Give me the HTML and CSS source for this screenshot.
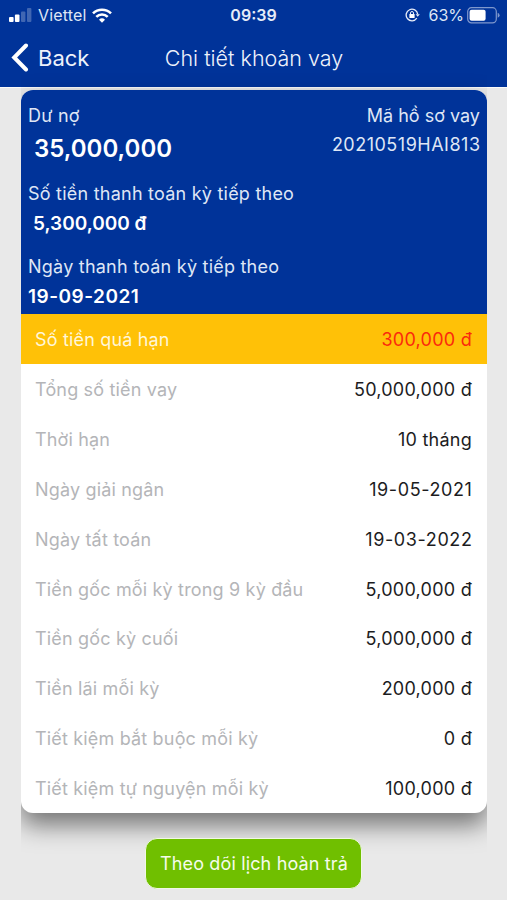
FILE: index.html
```
<!DOCTYPE html>
<html lang="vi">
<head>
    <meta charset="UTF-8">
    <meta name="viewport" content="width=device-width, initial-scale=1.0">
    <title>Chi tiết khoản vay</title>
    <link rel="stylesheet" href="styles.css">
</head>
<body>
    <header class="header">
        <!-- Thanh trạng thái -->
        <div class="status-bar">
            <div class="status-left">
                <svg class="signal" width="23" height="14" viewBox="0 0 23 14" fill="#fff">
                    <rect x="0" y="9" width="4.6" height="5" rx="1"/>
                    <rect x="5.9" y="6.5" width="4.6" height="7.5" rx="1"/>
                    <rect x="12" y="3.5" width="4.4" height="10.5" rx="1" opacity="0.25"/>
                    <rect x="18" y="0" width="4.4" height="14" rx="1" opacity="0.25"/>
                </svg>
                <span class="carrier">Viettel</span>
                <svg class="wifi" width="20" height="15" viewBox="0 0 20 15" fill="none" stroke="#fff" stroke-width="2.6">
                    <path d="M1 5.4a12.8 12.8 0 0 1 18 0"/>
                    <path d="M4.3 8.8a8.1 8.1 0 0 1 11.4 0"/>
                    <path d="M10 14.8l-3-3.1a4.3 4.3 0 0 1 6 0z" fill="#fff" stroke="none"/>
                </svg>
            </div>
            <div class="status-time">09:39</div>
            <div class="status-right">
                <svg class="lock" width="15" height="14" viewBox="0 0 15 14" fill="none" stroke="#e6ecf8" stroke-width="1.3">
                    <path d="M11.8 10.2a5.8 5.8 0 1 1 .9-4"/>
                    <path d="M10.6 6.2h4.2l-2.1 2.6z" fill="#e6ecf8" stroke="none"/>
                    <rect x="4.4" y="6" width="5.2" height="4" fill="#fff" stroke="none"/>
                    <path d="M5.5 6.3V5a1.5 1.5 0 0 1 3 0v1.3" stroke-width="1"/>
                </svg>
                <span class="percent">63%</span>
                <svg class="battery" width="33" height="17" viewBox="0 0 33 17">
                    <rect x="0.7" y="0.7" width="28.6" height="15.2" rx="3.8" fill="none" stroke="#7f98cd" stroke-width="1.2"/>
                    <rect x="2.6" y="2.8" width="16" height="11" rx="2" fill="#fff"/>
                    <path d="M30.7 5.8q1.9.8 1.9 2.5t-1.9 2.5z" fill="#7f98cd"/>
                </svg>
            </div>
        </div>
        <!-- Thanh điều hướng -->
        <nav class="nav-bar">
            <a href="#" class="back">
                <svg width="18" height="29" viewBox="0 0 18 29" fill="none" stroke="#fff" stroke-width="4" stroke-linecap="round">
                    <path d="M15 2.5L3.2 14.5 15 26.5"/>
                </svg>
                <span>Back</span>
            </a>
            <h1 class="title">Chi tiết khoản vay</h1>
        </nav>
    </header>

    <main class="content">
        <div class="card-wrap">
            <div class="card">
                <div class="summary">
                    <div class="summary-main">
                        <div class="label">Dư nợ</div>
                        <div class="balance">35,000,000</div>
                        <div class="label label-next">Số tiền thanh toán kỳ tiếp theo</div>
                        <div class="amount">5,300,000 đ</div>
                        <div class="label label-date">Ngày thanh toán kỳ tiếp theo</div>
                        <div class="date">19-09-2021</div>
                    </div>
                    <div class="loan-code">
                        <div class="label">Mã hồ sơ vay</div>
                        <div class="code">20210519HAI813</div>
                    </div>
                </div>
                <!-- Chi tiết -->
                <div class="rows">
                    <div class="row overdue"><span>Số tiền quá hạn</span><b>300,000 đ</b></div>
                    <div class="row"><span>Tổng số tiền vay</span><b>50,000,000 đ</b></div>
                    <div class="row"><span>Thời hạn</span><b>10 tháng</b></div>
                    <div class="row"><span>Ngày giải ngân</span><b class="day">19-05-2021</b></div>
                    <div class="row"><span>Ngày tất toán</span><b class="day">19-03-2022</b></div>
                    <div class="row"><span>Tiền gốc mỗi kỳ trong 9 kỳ đầu</span><b>5,000,000 đ</b></div>
                    <div class="row"><span>Tiền gốc kỳ cuối</span><b>5,000,000 đ</b></div>
                    <div class="row"><span>Tiền lãi mỗi kỳ</span><b>200,000 đ</b></div>
                    <div class="row"><span>Tiết kiệm bắt buộc mỗi kỳ</span><b>0 đ</b></div>
                    <div class="row"><span>Tiết kiệm tự nguyện mỗi kỳ</span><b>100,000 đ</b></div>
                </div>
            </div>
        </div>
        <button class="schedule-btn">Theo dõi lịch hoàn trả</button>
    </main>
</body>
</html>
```
FILE: styles.css
```
* {
    box-sizing: border-box;
}

body {
    margin: 0;
    height: 900px;
    overflow: hidden;
    background-color: #e9e9e9;
    font-family: Inter, "Liberation Sans", sans-serif;
    font-size: 18px;
    color: #1c1c1e;
}

.header {
    height: 87px;
    background-color: #003399;
    color: white;
}

.status-bar {
    display: grid;
    grid-template-columns: 1fr auto 1fr;
    align-items: center;
    height: 30px;
    padding: 0 7px 0 9px;
    font-size: 16px;
    line-height: 20px;
}

.status-left,
.status-right {
    display: flex;
    align-items: center;
}

.status-right {
    justify-content: flex-end;
}

.carrier {
    margin: 0 6px 0 6px;
    letter-spacing: 0.15px;
    color: #dfe6f5;
}

.status-time {
    margin-right: 2px;
    font-weight: 600;
    color: #e6ecf8;
}

.percent {
    margin: 0 3px 0 8px;
    color: #dfe6f5;
}

.nav-bar {
    display: grid;
    grid-template-columns: 1fr auto 1fr;
    align-items: center;
    height: 55px;
    padding: 0 10px 0 11px;
}

.back {
    display: flex;
    align-items: center;
    gap: 9px;
    color: #eef2fb;
    font-size: 22px;
    text-decoration: none;
}

.title {
    margin: 0;
    font-size: 21.5px;
    font-weight: 300;
    color: #eef2fb;
}

.content {
    display: flex;
    flex-direction: column;
    align-items: center;
    border-top: 1px solid #fafafa;
}

/* Bóng chỉ hiện phía dưới thẻ */
.card-wrap {
    width: 466px;
    height: 750px;
    padding-top: 2px;
    margin-left: 1px;
    overflow-x: clip;
}

.card {
    height: 722.5px;
    border-radius: 12px;
    background-color: white;
    box-shadow: 0 12px 24px rgba(0, 0, 0, 0.5);
}

.summary {
    display: flex;
    justify-content: space-between;
    height: 224px;
    padding: 14px 7px 0;
    border-radius: 12px 12px 0 0;
    background-color: #003399;
    color: white;
}

.label {
    height: 24px;
    line-height: 24px;
    letter-spacing: 0.23px;
    color: #dfe6f5;
    white-space: nowrap;
}

.balance {
    margin: 5px 0 0 6px;
    line-height: 32px;
    font-size: 24px;
    font-weight: 600;
}

.label-next {
    margin-top: 17px;
}

.amount {
    margin: 6px 0 0 5px;
    line-height: 24px;
    font-size: 19px;
    font-weight: 600;
}

.label-date {
    margin-top: 19px;
}

.date {
    margin-top: 6px;
    line-height: 24px;
    font-size: 19px;
    font-weight: 600;
    letter-spacing: 0.5px;
}

.loan-code {
    text-align: right;
}

.loan-code .label {
    letter-spacing: 0;
}

.code {
    margin-top: 5px;
    margin-right: -0.5px;
    line-height: 24px;
    letter-spacing: 0.5px;
    color: #dfe6f5;
}

.row {
    display: flex;
    justify-content: space-between;
    align-items: center;
    height: 49.85px;
    padding: 2px 15px 0 14px;
    letter-spacing: 0.17px;
    color: #b4b5b8;
}

.row b {
    font-weight: 400;
    letter-spacing: 0.25px;
    color: #1c1c1e;
}

.row .day {
    margin-right: -0.5px;
    letter-spacing: 0.6px;
}

.overdue {
    background-color: #ffc107;
    color: #fff6d8;
}

.row.overdue b {
    color: #fb2a0c;
}

.schedule-btn {
    width: 217px;
    height: 51px;
    padding: 0 0 0 1px;
    border: 1px solid #f0f8e4;
    border-radius: 12px;
    background-color: #70bf00;
    color: #f6fceb;
    font-family: inherit;
    font-size: 18px;
    letter-spacing: 0.15px;
    z-index: 1;
}
```
